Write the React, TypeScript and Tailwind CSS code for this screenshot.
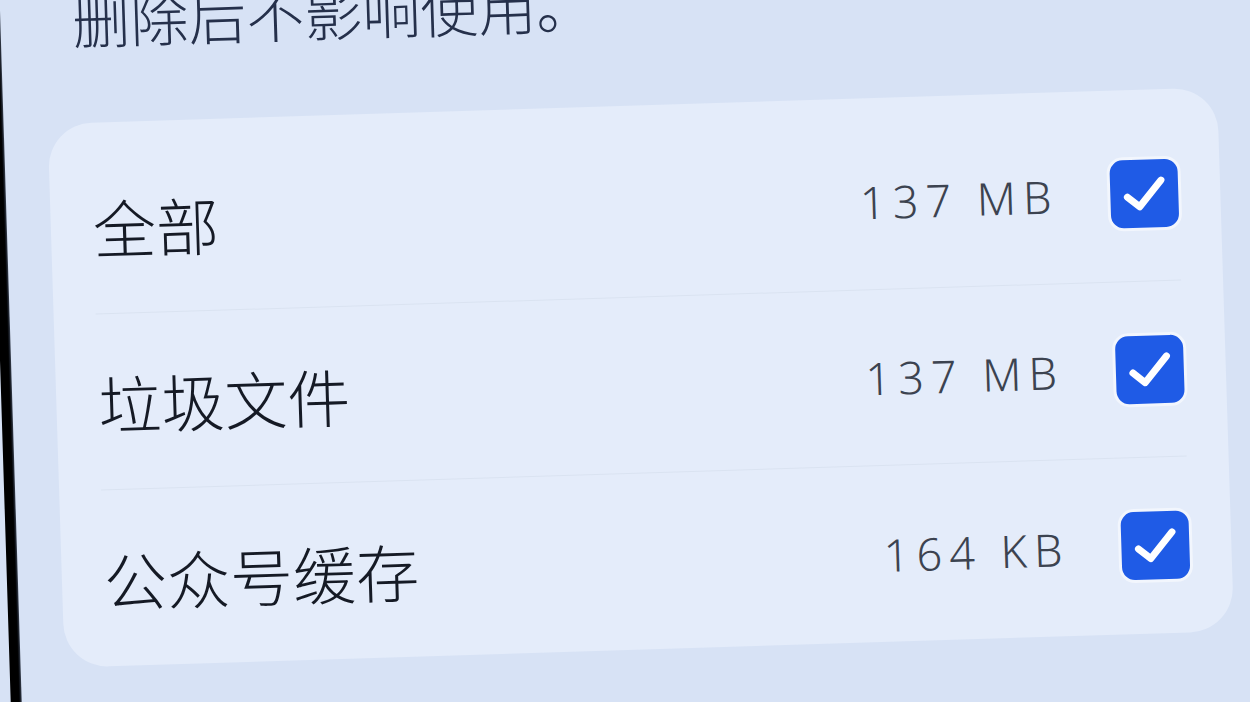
import React from "react";

interface ICacheItem {
  label: string;
  size: string;
  checked: boolean;
}

const items: ICacheItem[] = [
  { label: "全部", size: "137 MB", checked: true },
  { label: "垃圾文件", size: "137 MB", checked: true },
  { label: "公众号缓存", size: "164 KB", checked: true },
];

// blue rounded square with a white tick
const CheckBox = ({ checked }: { checked: boolean }) => {
  return (
    <div
      className={
        checked
          ? "flex h-[68px] w-[68px] shrink-0 items-center justify-center rounded-[13px] bg-[#1f5be6] shadow-[0_0_0_3px_rgba(255,255,255,0.5)]"
          : "h-[68px] w-[68px] shrink-0 rounded-[13px] border-[3px] border-[#9aa6b8]"
      }
    >
      {checked && (
        <svg width="68" height="68" viewBox="0 0 68 68" fill="none">
          <polyline
            points="17,37 29,47 51,21"
            stroke="white"
            strokeWidth="7"
            strokeLinecap="round"
            strokeLinejoin="round"
          />
        </svg>
      )}
    </div>
  );
};

const App = () => {
  return (
    <div className="h-[702px] w-[1250px] overflow-hidden bg-[#d7e2f5]">
      <div className="flex h-[702px] w-[1250px] rotate-[-1.8deg]">
        {/* phone edge */}
        <div className="-my-[80px] w-[11px] shrink-0 bg-linear-to-r from-black from-70% to-[#3b4352]" />

        <div className="flex flex-1 flex-col">
          <p className="-mt-[27px] ml-[72px] font-['Noto_Sans_CJK_SC',sans-serif] text-[58px] font-light leading-none text-[#25304b]">
            删除后不影响使用。
          </p>

          <div className="ml-[44px] mt-[75px] w-[1170px] rounded-[44px] bg-[#e4ecfa] pt-[16px]">
            <div className="mx-[42px] divide-y divide-[#dae3f1]">
              {items.map((item) => (
                <div key={item.label} className="flex h-[176px] items-center">
                  <p className="flex-1 font-['Noto_Sans_CJK_SC',sans-serif] text-[63px] font-light leading-none text-[#151a25]">
                    {item.label}
                  </p>
                  <p className="mr-[52px] font-['Noto_Sans',sans-serif] text-[45px] font-light leading-none tracking-[7px] text-[#3c4350]">
                    {item.size}
                  </p>
                  <CheckBox checked={item.checked} />
                </div>
              ))}
            </div>
          </div>
        </div>
      </div>
    </div>
  );
};

export default App;
